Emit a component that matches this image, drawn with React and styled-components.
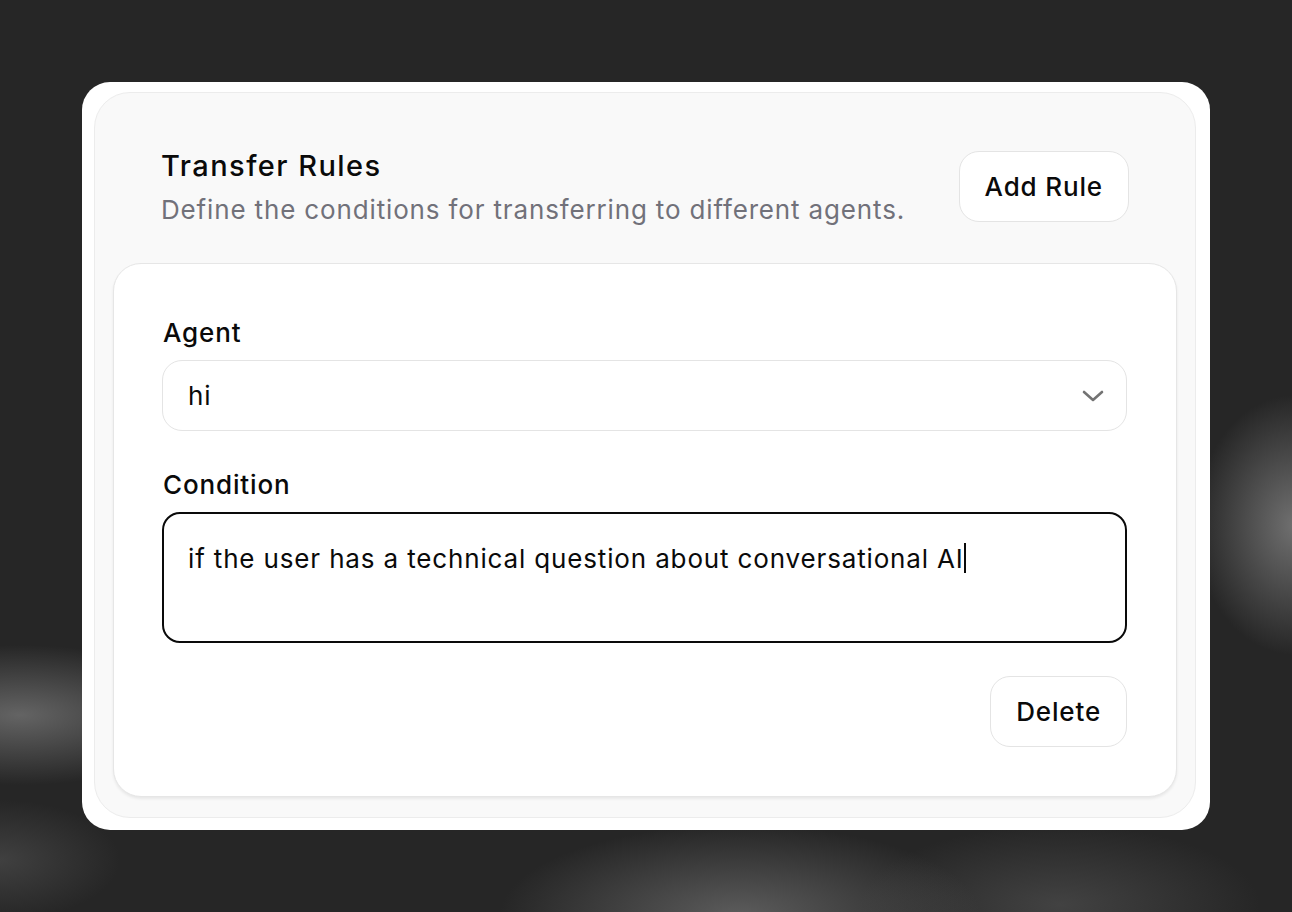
import React from "react";
import styled, { createGlobalStyle } from "styled-components";

const Global = createGlobalStyle`
  html, body { margin: 0; padding: 0; }
  body {
    font-family: Inter, "Noto Sans", "Liberation Sans", sans-serif;
    color: #0a0a0a;
    background-color: #262626;
    background-image:
      radial-gradient(ellipse 190px 70px at 20px 715px, rgba(115,115,115,0.8), rgba(115,115,115,0) 100%),
      radial-gradient(ellipse 120px 60px at 0px 860px, rgba(90,90,90,0.5), rgba(90,90,90,0) 100%),
      radial-gradient(ellipse 100px 130px at 1295px 525px, rgba(125,125,125,0.85), rgba(125,125,125,0) 100%),
      radial-gradient(ellipse 240px 90px at 740px 915px, rgba(105,105,105,0.8), rgba(105,105,105,0) 100%),
      radial-gradient(ellipse 200px 80px at 1060px 905px, rgba(85,85,85,0.6), rgba(85,85,85,0) 100%);
    -webkit-font-smoothing: antialiased;
  }
`;

const Page = styled.div`
  box-sizing: border-box;
  min-height: 912px;
  padding: 82px 0 0 82px;
`;

const Frame = styled.div`
  box-sizing: border-box;
  width: 1128px;
  height: 748px;
  background: #ffffff;
  border-radius: 28px;
  padding: 10px 14px 12px 12px;
  display: flex;
`;

const Panel = styled.section`
  box-sizing: border-box;
  flex: 1;
  background: #f9f9f9;
  border: 1px solid #ececec;
  border-radius: 36px;
  padding: 0 18px 20px 18px;
  display: flex;
  flex-direction: column;
`;

const Header = styled.header`
  display: flex;
  align-items: center;
  justify-content: space-between;
  padding: 55px 48px 35px 48px;
`;

const TitleBlock = styled.div`
  display: flex;
  flex-direction: column;
`;

const Title = styled.h2`
  margin: 0;
  font-size: 29px;
  line-height: 36px;
  font-weight: 500;
  letter-spacing: 1.45px;
`;

const Subtitle = styled.p`
  margin: 8px 0 0 0;
  font-size: 26px;
  line-height: 36px;
  font-weight: 400;
  color: #71717a;
  letter-spacing: 0.85px;
`;

const Button = styled.button`
  box-sizing: border-box;
  height: 71px;
  padding: 0 25px;
  margin-bottom: ${(p) => (p.$raised ? "4px" : "0")};
  background: #ffffff;
  border: 1.5px solid #e4e4e4;
  border-radius: 20px;
  font-family: inherit;
  font-size: 26px;
  font-weight: 500;
  letter-spacing: 0.85px;
  color: #0a0a0a;
  cursor: pointer;
`;

const Card = styled.div`
  box-sizing: border-box;
  flex: 1;
  background: #ffffff;
  border: 1.5px solid #e6e6e6;
  border-radius: 28px;
  box-shadow: 0 2px 3px rgba(0, 0, 0, 0.07);
  padding: 51px 49px 49px 48px;
  display: flex;
  flex-direction: column;
  gap: 36px;
`;

const Field = styled.div`
  display: flex;
  flex-direction: column;
  gap: 9px;
`;

const Label = styled.label`
  font-size: 26px;
  line-height: 36px;
  font-weight: 500;
  letter-spacing: 0.85px;
  padding-left: 1px;
`;

const Select = styled.div`
  box-sizing: border-box;
  height: 71px;
  border: 1.5px solid #e4e4e4;
  border-radius: 20px;
  padding: 0 22px 0 25px;
  display: flex;
  align-items: center;
  justify-content: space-between;
  font-size: 26px;
  letter-spacing: 0.85px;
  color: #0a0a0a;
`;

const Chevron = styled.svg`
  width: 22px;
  height: 12px;
  color: #737373;
`;

const TextBox = styled.div`
  box-sizing: border-box;
  height: 131px;
  border: 2px solid #0a0a0a;
  border-radius: 18px;
  padding: 27px 24px 20px 24px;
  font-size: 26px;
  line-height: 36px;
  letter-spacing: 0.85px;
  color: #0a0a0a;
`;

const Caret = styled.span`
  display: inline-block;
  width: 2px;
  height: 30px;
  background: #0a0a0a;
  vertical-align: -5px;
  margin-left: 0px;
`;

const Actions = styled.div`
  display: flex;
  justify-content: flex-end;
  margin-top: -3px;
`;

export default function App() {
  return (
    <>
      <Global />
      <Page>
        <Frame>
          <Panel>
            <Header>
              <TitleBlock>
                <Title>Transfer Rules</Title>
                <Subtitle>Define the conditions for transferring to different agents.</Subtitle>
              </TitleBlock>
              <Button $raised>Add Rule</Button>
            </Header>
            <Card>
              <Field>
                <Label>Agent</Label>
                <Select>
                  <span>hi</span>
                  <Chevron viewBox="0 0 22 12" fill="none">
                    <polyline
                      points="2,2 11,10 20,2"
                      stroke="currentColor"
                      strokeWidth="2.6"
                      strokeLinecap="round"
                      strokeLinejoin="round"
                    />
                  </Chevron>
                </Select>
              </Field>
              <Field>
                <Label>Condition</Label>
                <TextBox role="textbox">
                  if the user has a technical question about conversational AI
                  <Caret />
                </TextBox>
              </Field>
              <Actions>
                <Button>Delete</Button>
              </Actions>
            </Card>
          </Panel>
        </Frame>
      </Page>
    </>
  );
}
